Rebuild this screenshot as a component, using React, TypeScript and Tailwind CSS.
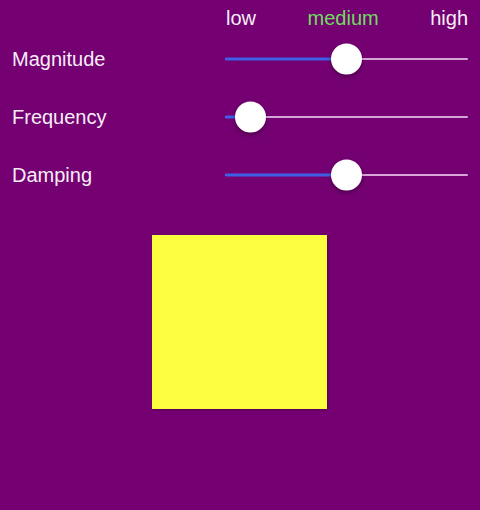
import React from 'react';

// ===== Slider (static, matches iOS UISlider look) =====
const TRACK_W = 243;
const THUMB = 31;

const Slider: React.FC<{ value: number }> = ({ value }) => {
  const left = Math.round(value * (TRACK_W - THUMB));
  const center = left + THUMB / 2;
  return (
    <div className="relative h-[32px] w-[243px]">
      <div className="absolute left-0 right-0 top-1/2 h-[2px] -translate-y-1/2 rounded-full bg-[#d7a6d8]" />
      <div
        className="absolute left-0 top-1/2 h-[3px] -translate-y-1/2 rounded-full bg-[#3f5fe6]"
        style={{ width: center }}
      />
      <div
        className="absolute top-1/2 h-[31px] w-[31px] -translate-y-1/2 rounded-full bg-white shadow-[0_2px_4px_rgba(0,0,0,0.35)]"
        style={{ left }}
      />
    </div>
  );
};

const rows = [
  { label: 'Magnitude', value: 0.5 },
  { label: 'Frequency', value: 0.045 },
  { label: 'Damping', value: 0.5 },
];

const App: React.FC = () => {
  return (
    <div className="h-[510px] w-[480px] overflow-hidden bg-[#740072] font-['Liberation_Sans',Arial,sans-serif] text-[20px] leading-6 text-[#f7eef7]">
      {/* scale labels */}
      <div className="grid grid-cols-[225px_243px] pt-[6px]">
        <div />
        <div className="flex justify-between">
          <span className="pl-px">low</span>
          <span className="text-[#6fdc5e]">medium</span>
          <span>high</span>
        </div>
      </div>

      {/* sliders */}
      {rows.map((r) => (
        <div key={r.label} className="grid h-[58px] grid-cols-[225px_243px] items-center">
          <div className="pl-3">{r.label}</div>
          <Slider value={r.value} />
        </div>
      ))}

      {/* animated box */}
      <div className="ml-[152px] mt-[31px] h-[174px] w-[175px] bg-[#fdfd40] shadow-[1px_1px_2px_rgba(0,0,0,0.3)]" />
    </div>
  );
};

export default App;
